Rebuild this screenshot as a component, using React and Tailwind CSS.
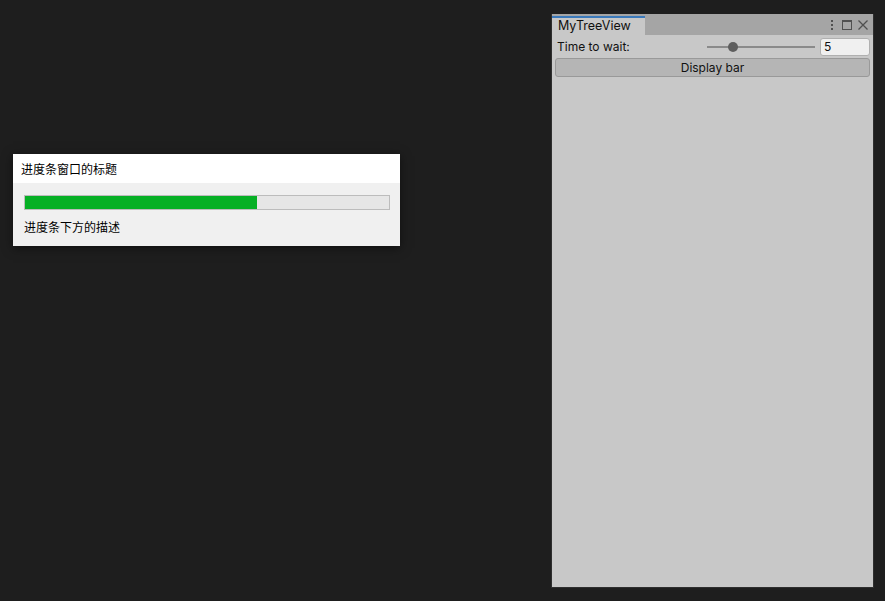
export default function App() {
  return (
    <div className="relative w-[885px] h-[601px] overflow-hidden bg-[#1e1e1e]">
      {/* progress dialog */}
      <div
        className="absolute left-[13px] top-[154px] w-[387px] h-[92px] flex flex-col shadow-[0_2px_10px_rgba(0,0,0,0.5)]"
        style={{ fontFamily: '"Noto Sans CJK SC", "Noto Sans", sans-serif' }}
      >
        <div className="h-[29px] bg-white flex items-center pl-[8px] text-[12px] text-black">
          进度条窗口的标题
        </div>
        <div className="flex-1 bg-[#f0f0f0] px-[11px] pt-[12px]">
          <div className="h-[15px] w-[366px] border border-[#bcbcbc] bg-[#e6e6e6]">
            <div className="h-full bg-[#06b025]" style={{ width: "63.7%" }} />
          </div>
          <div className="mt-[8px] text-[12px] leading-[17px] text-black">进度条下方的描述</div>
        </div>
      </div>

      {/* unity editor window */}
      <div
        className="absolute left-[551px] top-[14px] w-[323px] h-[574px] flex flex-col border border-[#2f2f2f] border-t-0"
        style={{ fontFamily: 'Inter, "Noto Sans", sans-serif' }}
      >
        <div className="h-[21px] bg-[#a5a5a5] flex items-end">
          <div className="h-[19px] w-[93px] bg-[#c8c8c8] border-t-2 border-[#3a79bb] flex items-center pl-[6px] text-[12.5px] text-[#101010]">
            MyTreeView
          </div>
          <div className="flex-1 h-full flex items-center justify-end pr-[4px]">
            <svg width="6" height="12" viewBox="0 0 6 12" className="mr-[6px]">
              <rect x="2" y="1" width="2" height="2" fill="#505050" />
              <rect x="2" y="5" width="2" height="2" fill="#505050" />
              <rect x="2" y="9" width="2" height="2" fill="#505050" />
            </svg>
            <svg width="12" height="12" viewBox="0 0 12 12" className="mr-[4px]">
              <rect x="1.5" y="1.5" width="9" height="9" fill="none" stroke="#505050" />
              <rect x="1" y="1" width="10" height="2" fill="#505050" />
            </svg>
            <svg width="12" height="12" viewBox="0 0 12 12">
              <path d="M1.5 1.5 L10.5 10.5 M10.5 1.5 L1.5 10.5" stroke="#505050" strokeWidth="1.3" />
            </svg>
          </div>
        </div>
        <div className="flex-1 bg-[#c8c8c8] pl-[3px] pr-[3px] pt-[2px] flex flex-col gap-[2px]">
          <div className="h-[19px] flex items-center">
            <span className="pl-[2px] text-[12px] text-[#111]">Time to wait:</span>
            <div className="ml-auto relative w-[108px] h-[10px] flex items-center mr-[5px]">
              <div className="w-full h-[2px] bg-[#8a8a8a]" />
              <div className="absolute left-[21px] top-0 w-[10px] h-[10px] rounded-full bg-[#5e5e5e]" />
            </div>
            <div className="w-[50px] h-[18px] rounded-[3px] border border-[#b0b0b0] bg-[#f0f0f0] flex items-center pl-[3px] text-[12px] text-[#111]">
              5
            </div>
          </div>
          <div className="h-[19px] rounded-[3px] border border-[#999999] bg-[#b5b5b5] flex items-center justify-center text-[12px] text-[#111]">
            Display bar
          </div>
        </div>
      </div>
    </div>
  );
}
